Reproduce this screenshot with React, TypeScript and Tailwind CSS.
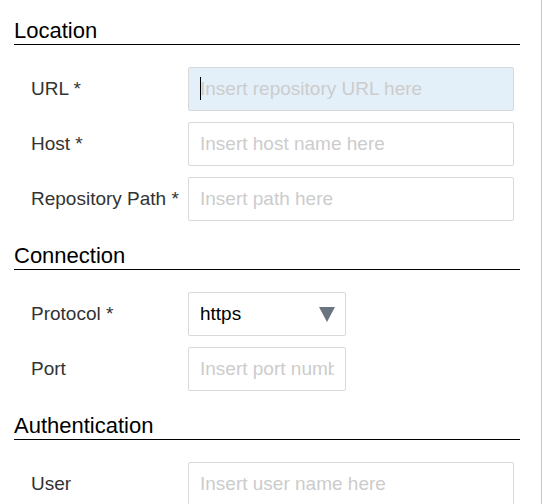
import React from 'react';

const font = { fontFamily: '"Liberation Sans", Arial, sans-serif' };

interface FieldProps {
    label: string;
    placeholder?: string;
    narrow?: boolean;
    focused?: boolean;
}

const Field: React.FC<FieldProps> = ({ label, placeholder, narrow, focused }) => {
    return (
        <div className="flex items-center">
            <label className="w-[174px] shrink-0 whitespace-nowrap pl-[17px] text-[19px] text-[#333333]">{label}</label>
            <div className={`relative ${narrow ? 'w-[158px]' : 'w-[326px]'}`}>
                <input
                    type="text"
                    placeholder={placeholder}
                    className={`block h-[44px] w-full rounded-[2px] border border-[#d9d9d9] px-[11px] text-[19px] text-black outline-none placeholder:text-[#cccccc] ${focused ? 'bg-[#e4f0f9]' : 'bg-white'}`}
                    style={font}
                />
                {focused && <span className="absolute left-[12px] top-[10px] h-[23px] w-px bg-black" />}
            </div>
        </div>
    );
};

const ProtocolSelect: React.FC = () => {
    return (
        <div className="flex items-center">
            <label className="w-[174px] shrink-0 whitespace-nowrap pl-[17px] text-[19px] text-[#333333]">Protocol *</label>
            <div className="flex h-[44px] w-[158px] items-center justify-between rounded-[2px] border border-[#d9d9d9] bg-white pl-[11px] pr-[10px] text-[19px] text-black">
                <span>https</span>
                <svg width="16" height="15" viewBox="0 0 16 15">
                    <polygon points="0,0 16,0 8,15" fill="#6b7580" />
                </svg>
            </div>
        </div>
    );
};

const SectionTitle: React.FC<{ title: string }> = ({ title }) => (
    <h2 className="h-[27px] w-[506px] border-b border-black text-[22px] leading-[26px] text-black">{title}</h2>
);

export default function App() {
    return (
        <div className="min-h-[504px] w-[542px] border-r border-[#c8c8c8] bg-white" style={font}>
            <div className="flex flex-col gap-[22px] pl-[14px] pt-[18px]">
                <SectionTitle title="Location" />
                <div className="flex flex-col gap-[11px]">
                    <Field label="URL *" placeholder="Insert repository URL here" focused />
                    <Field label="Host *" placeholder="Insert host name here" />
                    <Field label="Repository Path *" placeholder="Insert path here" />
                </div>
                <SectionTitle title="Connection" />
                <div className="flex flex-col gap-[11px]">
                    <ProtocolSelect />
                    <Field label="Port" placeholder="Insert port number here" narrow />
                </div>
                <SectionTitle title="Authentication" />
                <div className="flex flex-col gap-[11px]">
                    <Field label="User" placeholder="Insert user name here" />
                </div>
            </div>
        </div>
    );
}
